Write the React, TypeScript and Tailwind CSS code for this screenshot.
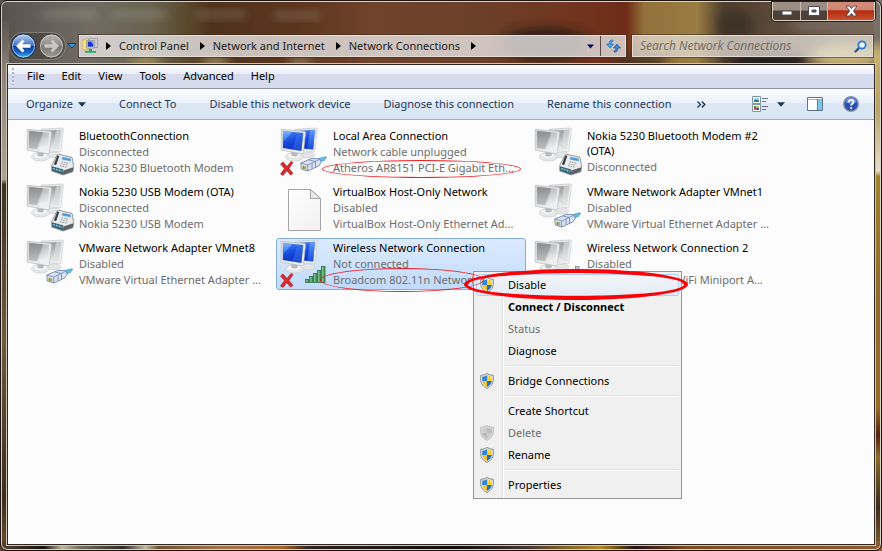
import { clsx } from "clsx";

type Overlay = "modem" | "plug" | "signal";

type Connection = {
  name: string;
  status: string;
  device?: string;
  icon: "monitors" | "document";
  overlay?: Overlay;
  active?: boolean;
  selected?: boolean;
  mark?: "thin" | "wide";
};

const connections: Connection[] = [
  { name: "BluetoothConnection", status: "Disconnected", device: "Nokia 5230 Bluetooth Modem", icon: "monitors", overlay: "modem" },
  { name: "Local Area Connection", status: "Network cable unplugged", device: "Atheros AR8151 PCI-E Gigabit Eth...", icon: "monitors", overlay: "plug", active: true, mark: "wide" },
  { name: "Nokia 5230 Bluetooth Modem #2 (OTA)", status: "Disconnected", icon: "monitors", overlay: "modem" },
  { name: "Nokia 5230 USB Modem (OTA)", status: "Disconnected", device: "Nokia 5230 USB Modem", icon: "monitors", overlay: "modem" },
  { name: "VirtualBox Host-Only Network", status: "Disabled", device: "VirtualBox Host-Only Ethernet Ad...", icon: "document" },
  { name: "VMware Network Adapter VMnet1", status: "Disabled", device: "VMware Virtual Ethernet Adapter ...", icon: "monitors", overlay: "plug" },
  { name: "VMware Network Adapter VMnet8", status: "Disabled", device: "VMware Virtual Ethernet Adapter ...", icon: "monitors", overlay: "plug" },
  { name: "Wireless Network Connection", status: "Not connected", device: "Broadcom 802.11n Network", icon: "monitors", overlay: "signal", active: true, selected: true, mark: "thin" },
  { name: "Wireless Network Connection 2", status: "Disabled", device: "Microsoft Virtual WiFi Miniport A...", icon: "monitors", overlay: "signal" },
];

type MenuEntry =
  | "separator"
  | { label: string; shield?: boolean; bold?: boolean; disabled?: boolean; hot?: boolean };

const contextMenu: MenuEntry[] = [
  { label: "Disable", shield: true, hot: true },
  { label: "Connect / Disconnect", bold: true },
  { label: "Status", disabled: true },
  { label: "Diagnose" },
  "separator",
  { label: "Bridge Connections", shield: true },
  "separator",
  { label: "Create Shortcut" },
  { label: "Delete", shield: true, disabled: true },
  { label: "Rename", shield: true },
  "separator",
  { label: "Properties", shield: true },
];

const menus = ["File", "Edit", "View", "Tools", "Advanced", "Help"];
const crumbs = ["Control Panel", "Network and Internet", "Network Connections"];
const commands = ["Connect To", "Disable this network device", "Diagnose this connection", "Rename this connection"];

const Wallpaper = () => (
  <svg
    className="absolute inset-0 h-full w-full"
    viewBox="0 0 882 551"
    preserveAspectRatio="none"
    aria-hidden="true"
  >
    <defs>
      <linearGradient id="wall-top">
        <stop offset="0" stopColor="#57524c" />
        <stop offset=".1" stopColor="#716b62" />
        <stop offset=".17" stopColor="#6a6350" />
        <stop offset=".21" stopColor="#5b4a2e" />
        <stop offset=".24" stopColor="#4f321c" />
        <stop offset=".34" stopColor="#5c351d" />
        <stop offset=".42" stopColor="#70432b" />
        <stop offset=".54" stopColor="#6b4029" />
        <stop offset=".64" stopColor="#71371f" />
        <stop offset=".71" stopColor="#6f2c18" />
        <stop offset=".73" stopColor="#92713a" />
        <stop offset=".79" stopColor="#997d42" />
        <stop offset=".82" stopColor="#51402f" />
        <stop offset=".9" stopColor="#5e4c3e" />
        <stop offset="1" stopColor="#7b6a5d" />
      </linearGradient>
      <linearGradient id="wall-left" x2="0" y2="1">
        <stop offset="0" stopColor="#5c564e" />
        <stop offset=".1" stopColor="#8d8379" />
        <stop offset=".3" stopColor="#aaa39a" />
        <stop offset=".31" stopColor="#3b3122" />
        <stop offset=".6" stopColor="#6b5a3e" />
        <stop offset=".9" stopColor="#3a2c1c" />
        <stop offset="1" stopColor="#6b5034" />
      </linearGradient>
      <linearGradient id="wall-right" x2="0" y2="1">
        <stop offset="0" stopColor="#77706a" />
        <stop offset=".07" stopColor="#7a7066" />
        <stop offset=".1" stopColor="#c0ac6a" />
        <stop offset=".2" stopColor="#b7a368" />
        <stop offset=".31" stopColor="#e6dfcb" />
        <stop offset=".32" stopColor="#a08228" />
        <stop offset=".55" stopColor="#94692c" />
        <stop offset=".74" stopColor="#9b6a28" />
        <stop offset=".79" stopColor="#57200f" />
        <stop offset=".83" stopColor="#8a6a28" />
        <stop offset=".92" stopColor="#3c2b1e" />
        <stop offset="1" stopColor="#8a6030" />
      </linearGradient>
      <linearGradient id="wall-bottom">
        <stop offset="0" stopColor="#5b4430" />
        <stop offset=".05" stopColor="#15100c" />
        <stop offset=".07" stopColor="#c0b69a" />
        <stop offset=".09" stopColor="#77705c" />
        <stop offset=".14" stopColor="#2e2a24" />
        <stop offset=".165" stopColor="#c3b99f" />
        <stop offset=".18" stopColor="#6e5232" />
        <stop offset=".25" stopColor="#a4764c" />
        <stop offset=".32" stopColor="#a8652a" />
        <stop offset=".35" stopColor="#31231d" />
        <stop offset=".52" stopColor="#120d10" />
        <stop offset=".6" stopColor="#4a382f" />
        <stop offset=".68" stopColor="#b48a22" />
        <stop offset=".72" stopColor="#241010" />
        <stop offset=".78" stopColor="#7f4c20" />
        <stop offset="1" stopColor="#8a5a30" />
      </linearGradient>
      <filter id="soft" x="-50%" y="-50%" width="200%" height="200%">
        <feGaussianBlur stdDeviation="6" />
      </filter>
      <filter id="soft-label" x="-50%" y="-50%" width="200%" height="200%">
        <feGaussianBlur stdDeviation="4" />
      </filter>
    </defs>
    <rect width="882" height="70" fill="url(#wall-top)" />
    <rect y="20" width="9" height="531" fill="url(#wall-left)" />
    <rect x="874" width="8" height="551" fill="url(#wall-right)" />
    <rect y="541" width="882" height="10" fill="url(#wall-bottom)" />
    <g filter="url(#soft)">
      <ellipse cx="545" cy="44" rx="46" ry="16" fill="#2a1f18" />
      <ellipse cx="640" cy="62" rx="30" ry="8" fill="#4a3322" />
      <ellipse cx="770" cy="62" rx="42" ry="9" fill="#1d1612" />
      <ellipse cx="845" cy="56" rx="34" ry="12" fill="#cbb777" />
      <ellipse cx="735" cy="26" rx="18" ry="16" fill="#3d3026" />
      <ellipse cx="830" cy="24" rx="40" ry="8" fill="#77695e" />
      <ellipse cx="145" cy="62" rx="16" ry="5" fill="#b09a5c" />
      <ellipse cx="215" cy="63" rx="14" ry="5" fill="#b8a679" />
      <ellipse cx="300" cy="64" rx="12" ry="4" fill="#b9a68a" />
    </g>
    <g filter="url(#soft-label)" fill="#b9b0a4" opacity=".3">
      <rect x="42" y="11" width="54" height="7" />
      <rect x="112" y="11" width="54" height="7" />
      <rect x="196" y="11" width="50" height="7" />
      <rect x="274" y="12" width="46" height="7" />
    </g>
  </svg>
);

const CaptionButtons = () => (
  <div className="flex h-[19px] overflow-hidden rounded-b-[4px] border border-t-0 border-[#d8cfc7] shadow-[0_0_0_1px_#2b211b]">
    <button
      aria-label="Minimize"
      className="flex w-7 items-center justify-center border-r border-[#c9bfb6] bg-linear-to-b from-[#9a8d84] from-45% to-[#4d4037] to-50%"
    >
      <svg width="12" height="12" viewBox="0 0 12 12">
        <rect x="1" y="6" width="10" height="4" fill="#fff" stroke="#4d4a52" />
      </svg>
    </button>
    <button
      aria-label="Maximize"
      className="flex w-[27px] items-center justify-center border-r border-[#c9bfb6] bg-linear-to-b from-[#9a8d84] from-45% to-[#4d4037] to-50%"
    >
      <svg width="12" height="12" viewBox="0 0 12 12">
        <path d="M.5 1.500h11v9H.5zM4 5v2h4V5z" fill="#fff" fillRule="evenodd" stroke="#4d4a52" />
      </svg>
    </button>
    <button
      aria-label="Close"
      className="flex w-[46px] items-center justify-center bg-linear-to-b from-[#d08a76] from-40% via-[#b6280c] via-50% to-[#c8502c]"
    >
      <svg width="13" height="12" viewBox="0 0 13 12">
        <path
          d="M1 1h3.500l2 2.500 2-2.500H12L8.500 6l3.500 5H8.500l-2-2.500-2 2.500H1L4.500 6z"
          fill="#fff"
          stroke="#5b4a50"
        />
      </svg>
    </button>
  </div>
);

const NavButtons = () => (
  <div className="flex items-center">
    <div className="flex rounded-full bg-black/20 shadow-[0_0_0_1px_#ffffff33]">
      <button aria-label="Back">
        <svg width="27" height="26" viewBox="0 0 27 26">
          <defs>
            <linearGradient id="back" x2="0" y2="1">
              <stop offset="0" stopColor="#bcd3f3" />
              <stop offset=".48" stopColor="#3f72c4" />
              <stop offset=".5" stopColor="#0b3a94" />
              <stop offset=".75" stopColor="#1660c4" />
              <stop offset="1" stopColor="#3fc4f5" />
            </linearGradient>
          </defs>
          <circle cx="13.500" cy="13" r="12" fill="url(#back)" stroke="#142a55" />
          <circle cx="13.500" cy="13" r="11" fill="none" stroke="#d5e4f8" opacity=".7" />
          <path d="M6 13l6.500-6.500 2 2L12 11.300h8.500v3.400H12l2.500 2.800-2 2z" fill="#fff" />
        </svg>
      </button>
      <button aria-label="Forward" disabled>
        <svg width="28" height="26" viewBox="0 0 28 26">
          <defs>
            <linearGradient id="forward" x2="0" y2="1">
              <stop offset="0" stopColor="#b9b7b2" />
              <stop offset=".48" stopColor="#8d8b86" />
              <stop offset=".5" stopColor="#75736e" />
              <stop offset="1" stopColor="#a09e99" />
            </linearGradient>
          </defs>
          <circle cx="14.500" cy="13" r="12" fill="url(#forward)" stroke="#4c4a46" />
          <circle cx="14.500" cy="13" r="11" fill="none" stroke="#e3e2df" opacity=".6" />
          <path d="M22 13l-6.500-6.500-2 2 2.500 2.800H7.500v3.400H16l-2.500 2.800 2 2z" fill="#c9c8c5" />
        </svg>
      </button>
    </div>
    <button aria-label="Recent pages" className="ml-0.5">
      <svg width="10" height="8" viewBox="0 0 10 8">
        <path d="M.8 1.500h8.400L5 6z" fill="#3c9be0" stroke="#123a66" />
      </svg>
    </button>
  </div>
);

const AddressIcon = () => (
  <svg width="16" height="16" viewBox="0 0 16 16" className="shrink-0" aria-hidden="true">
    <path d="M.3 2.500L4 .8h2.500v11H.3z" fill="#f3dd7e" stroke="#c2a440" strokeWidth=".6" />
    <path d="M7 .5h8.500v9H7z" fill="#c9cdd6" stroke="#8b8f99" strokeWidth=".6" />
    <path d="M4.500 2.500h8v7.500h-8z" fill="#d8dce5" stroke="#777c88" strokeWidth=".6" />
    <path d="M5.700 3.500h5.600v5.200H5.700z" fill="#1733d1" />
    <path d="M8.500 3.500h2.800v3z" fill="#8fa8f5" />
    <path d="M7 11h3v2h4v1.800H3V13h4z" fill="#1fae6b" />
  </svg>
);

const Caret = ({ className }: { className?: string }) => (
  <svg width="9" height="5" viewBox="0 0 9 5" className={className} aria-hidden="true">
    <path d="M0 0h9L4.500 5z" fill="currentColor" />
  </svg>
);

const Chevron = () => (
  <svg width="5" height="8" viewBox="0 0 5 8" className="mx-2 shrink-0" aria-hidden="true">
    <path d="M0 0l5 4-5 4z" fill="#000" />
  </svg>
);

const AddressBar = () => (
  <nav
    aria-label="Address"
    className="ml-0.5 flex h-[22px] min-w-0 flex-1 items-center border border-[#e6ded8]/90 bg-[#e9e5e3]/80 pl-0.5 shadow-[0_0_0_1px_#40302699]"
  >
    <AddressIcon />
    {crumbs.map((crumb) => (
      <span key={crumb} className="flex items-center whitespace-nowrap">
        <Chevron />
        <a href="#" className="mr-[3px] text-[#1b1b1b]">
          {crumb}
        </a>
      </span>
    ))}
    <Chevron />
    <span className="flex-1" />
    <button aria-label="Previous locations" className="px-[6px]">
      <Caret className="w-[7px] text-[#00005a]" />
    </button>
    <button
      aria-label="Refresh"
      className="flex h-full w-[25px] items-center justify-center border-l border-[#5b4d45]"
    >
      <svg width="15" height="14" viewBox="0 0 15 14">
        <path d="M7 1C4.500.8 3 2 3 5H.5L4 9l3.500-4H5c0-1.800.6-2.500 2-2.800z" fill="#4aa3e6" stroke="#1d62b0" strokeWidth=".6" />
        <path d="M8 13c2.500.2 4-1 4-4h2.500L11 5 7.500 9H10c0 1.800-.6 2.500-2 2.800z" fill="#3a86d8" stroke="#174f99" strokeWidth=".6" />
      </svg>
    </button>
  </nav>
);

const SearchBox = () => (
  <label className="ml-[6px] flex h-[22px] w-[241px] items-center border border-[#e6ded8]/90 bg-[#e6e0d8]/75 pl-[7px] pr-[5px] shadow-[0_0_0_1px_#40302699]">
    <input
      type="text"
      aria-label="Search Network Connections"
      placeholder="Search Network Connections"
      className="min-w-0 flex-1 bg-transparent font-['Open_Sans','Noto_Sans',sans-serif] text-[12px] italic outline-none placeholder:text-[#6d6964]"
    />
    <svg width="13" height="13" viewBox="0 0 13 13" aria-hidden="true">
      <path d="M5.500 7.500L1.500 11.500" stroke="#24539c" strokeWidth="2.400" strokeLinecap="round" />
      <circle cx="8" cy="5" r="3.700" fill="#e6f2fc" stroke="#2f7cc8" strokeWidth="1.800" />
    </svg>
  </label>
);

const MenuBar = () => (
  <div className="flex h-6 items-center border-b border-[#8c95a8] bg-linear-to-b from-white from-0% via-[#e9edf7] via-38% to-[#d6dcee] to-40% pb-px pl-1">
    <span className="h-[17px] w-[2px] bg-[repeating-linear-gradient(to_bottom,#b2b7c4_0_2px,transparent_2px_4px)]" />
    <div className="ml-[13px] flex gap-[17px]">
      {menus.map((menu) => (
        <button key={menu}>{menu}</button>
      ))}
    </div>
  </div>
);

const Toolbar = () => (
  <div className="flex h-[31px] items-center border-b border-[#a0afc3] bg-linear-to-b from-[#fafcfe] from-0% via-[#e9f1fb] via-45% to-[#dce7f5] to-50% pl-[18px] pr-[15px] text-[#1e395b]">
    <div className="flex items-center gap-[33px] whitespace-nowrap">
      <button className="flex items-center gap-[5px]">
        Organize <Caret className="w-2" />
      </button>
      {commands.map((command) => (
        <button key={command}>{command}</button>
      ))}
    </div>
    <button aria-label="More commands" className="ml-[26px]">
      <svg width="9" height="7" viewBox="0 0 9 7">
        <path d="M.5.500L3.500 3.500.500 6.500M4.800.500l3 3-3 3" fill="none" stroke="#1e395b" strokeWidth="1.400" />
      </svg>
    </button>
    <div className="ml-auto flex items-center">
      <button aria-label="Change your view">
        <svg width="17" height="16" viewBox="0 0 17 16">
          <path d="M.5.500h8v7h-8zM.5 8.500h8v7h-8z" fill="#fff" stroke="#8391a5" />
          <path d="M2 2h5v4H2z" fill="#9ed3ef" />
          <path d="M2 4.500L4 3.500l3 1V6H2z" fill="#2a7d74" />
          <path d="M2 10h2.500v2H2z" fill="#3b8f3b" />
          <path d="M4.500 10H7v2H4.500z" fill="#e0b62f" />
          <path d="M2 12h2.500v2H2z" fill="#c84431" />
          <path d="M4.500 12H7v2H4.500z" fill="#2a4ba8" />
          <path d="M10 2.500h6M10 5.500h4M10 10.500h6M10 13.500h4" stroke="#63748c" />
        </svg>
      </button>
      <button aria-label="More view options" className="ml-2">
        <Caret className="w-2" />
      </button>
      <button aria-label="Show the preview pane" className="ml-[22px]">
        <svg width="16" height="14" viewBox="0 0 16 14">
          <path d="M.5.500h15v13H.5z" fill="#fff" stroke="#5d7391" />
          <path d="M1 2.500h14" stroke="#a4b3c6" />
          <path d="M10 3h5v10h-5z" fill="#7cc6e6" />
          <path d="M10.500 2v11" stroke="#3b8bb5" />
        </svg>
      </button>
      <button aria-label="Get help" className="ml-5">
        <svg width="16" height="16" viewBox="0 0 16 16">
          <circle cx="8" cy="8" r="7.300" fill="#2a50b8" stroke="#8d93a0" strokeWidth="1.400" />
          <path d="M2.300 6a6 6 0 0 1 11.400 0q-5.700 3-11.400 0z" fill="#6f92de" />
          <path d="M5.800 6.200c0-3.200 4.600-3 4.600-.2 0 1.700-2.300 1.700-2.300 3.600" fill="none" stroke="#fff" strokeWidth="1.800" />
          <circle cx="8.100" cy="12" r="1.100" fill="#fff" />
        </svg>
      </button>
    </div>
  </div>
);

// gradients shared by every connection icon
const IconDefs = () => (
  <svg width="0" height="0" className="absolute" aria-hidden="true">
    <defs>
      <linearGradient id="screen-off" x1="0" y1="0" x2=".3" y2="1">
        <stop offset="0" stopColor="#8f9091" />
        <stop offset=".5" stopColor="#b3b4b5" />
        <stop offset="1" stopColor="#e9eaea" />
      </linearGradient>
      <linearGradient id="glare-off" x2="0" y2="1">
        <stop offset="0" stopColor="#8b8c8d" />
        <stop offset="1" stopColor="#b9babb" />
      </linearGradient>
      <linearGradient id="screen-on" x1="0" y1="0" x2=".3" y2="1">
        <stop offset="0" stopColor="#4d8df5" />
        <stop offset=".5" stopColor="#1a50e0" />
        <stop offset="1" stopColor="#0a2fc4" />
      </linearGradient>
      <linearGradient id="glare-on" x2="0" y2="1">
        <stop offset="0" stopColor="#86bbff" />
        <stop offset="1" stopColor="#2565e8" />
      </linearGradient>
      <linearGradient id="bezel" x2="1" y2="1">
        <stop offset="0" stopColor="#d4d6d8" />
        <stop offset="1" stopColor="#f6f7f7" />
      </linearGradient>
      <linearGradient id="bar-on" x2="1">
        <stop offset="0" stopColor="#9bcfa6" />
        <stop offset="1" stopColor="#358852" />
      </linearGradient>
      <linearGradient id="paper" x2="1" y2="1">
        <stop offset="0" stopColor="#fff" />
        <stop offset="1" stopColor="#f1f1f1" />
      </linearGradient>
    </defs>
  </svg>
);

const BackMonitor = ({ active }: { active?: boolean }) => (
  <g>
    <ellipse cx="29" cy="28" rx="7" ry="3" fill="#e3e5e6" stroke="#c5c8ca" strokeWidth=".5" />
    <path d="M16 2.200L37.500 1l.8.800L36 24l-1.500.8L16 23z" fill="url(#bezel)" stroke="#c3c6c9" strokeWidth=".6" />
    <path d="M18 4l18-1.200L34.200 22.500 18 21z" fill={active ? "url(#screen-on)" : "url(#screen-off)"} />
    <path d="M31 3.200l5-.4-1.800 19.700-6-.6z" fill={active ? "url(#glare-on)" : "#dedfdf"} opacity=".6" />
  </g>
);

const FrontMonitor = ({ active }: { active?: boolean }) => (
  <g>
    <ellipse cx="15.500" cy="29.800" rx="9" ry="4.300" fill="#e6e8e9" stroke="#c3c6c9" strokeWidth=".6" />
    <ellipse cx="15" cy="28.600" rx="6" ry="2.300" fill="#f5f6f6" />
    <path d="M12 24l7 1-.5 3.800q-3 1.200-6 0z" fill="#b7babd" />
    <path d="M2.300 2.300L25.800 4.500l.8.800L24.300 26.200l-1.200.5L2.200 23.200z" fill="url(#bezel)" stroke="#bcbfc2" strokeWidth=".7" />
    <path d="M4 4l20.200 1.900L22.400 24 3.900 21z" fill={active ? "url(#screen-on)" : "url(#screen-off)"} />
    <path
      d={active ? "M4 4l9 .9L3.900 16z" : "M4 4l13.500 1.300L12 22.300 3.900 21z"}
      fill={active ? "url(#glare-on)" : "url(#glare-off)"}
      opacity=".85"
    />
    <path d="M18.500 5.400l5.700.5L22.400 24l-9-1.500z" fill={active ? "#5a96f7" : "#fff"} opacity=".3" />
  </g>
);

const ModemOverlay = () => (
  <g transform="translate(26 27)">
    <path d="M6 1.200L8.500.5 21 3.300l1.800 10-1 4.500L12 21 .7 17v-5.500z" fill="#e9ebed" stroke="#6f7479" strokeWidth=".7" />
    <path d="M6.300 1.500l2 .5L5.200 11l-2.400-.6z" fill="#3a3e42" />
    <path d="M11.300 3l8.200 1.500.5 2.800-9-1.700z" fill="#3f9ae2" stroke="#b9c3cc" strokeWidth=".4" />
    <path d="M10.500 7.800l7.500 1.500M9.700 9.800l7.500 1.500M9 11.800l7.500 1.500" stroke="#8e9399" strokeDasharray="1.600 .9" strokeWidth=".9" />
    <path d="M1 12.200l11.300 3.300-.4 5L1 16.700z" fill="#3e5a68" />
    <path d="M2 14.500l9.300 2.900" stroke="#69cde6" strokeWidth="1.800" strokeDasharray="1.900 1" />
    <path d="M12.300 16.500l10-3.200-.6 4.200-9.700 3.200z" fill="#5c6166" />
  </g>
);

const PlugOverlay = () => (
  <g transform="translate(21 29)">
    <path d="M15 3.500L25 .8l1.800.2-2.300 3.500-6 2z" fill="#5cc0e6" stroke="#3f8fb8" strokeWidth=".5" />
    <path d="M.8 7l11-4.500L19 2.700l2.500 3.300-2.800 4-11 5L1.200 13z" fill="#d9e2f2" stroke="#5f7ba8" strokeWidth=".8" />
    <path d="M.8 7l7 2-.2 6M7.800 9l11-5.300M12 7v5.500M15.500 5.500v6M9 4l6.500 1.500" fill="none" stroke="#7088b0" strokeWidth=".8" />
    <path d="M2 9.500v3l4.500 1.300v-3.600z" fill="#c9c98a" />
    <path d="M3.500 10v3M5 10.400v3" stroke="#667" strokeWidth=".7" />
  </g>
);

const SignalOverlay = ({ active }: { active?: boolean }) => (
  <g
    fill={active ? "url(#bar-on)" : "#c4c6c8"}
    stroke={active ? "#2a7343" : "#85888b"}
    strokeWidth=".8"
  >
    <rect x="26.500" y="40.500" width="3.500" height="3" />
    <rect x="30.500" y="37.500" width="3.500" height="6" />
    <rect x="34.500" y="34.500" width="3.500" height="9" />
    <rect x="38.500" y="31.500" width="3.500" height="12" />
    <rect x="42.500" y="27.500" width="3.500" height="16" />
  </g>
);

const ConnectionIcon = ({ icon, overlay, active }: Connection) => (
  <svg width="52" height="50" viewBox="0 0 52 50" className="shrink-0" aria-hidden="true">
    {icon === "document" ? (
      <>
        <path d="M9.500 6.500h22l10 9v32h-32z" fill="url(#paper)" stroke="#a5a5a5" />
        <path d="M31.500 6.500v9h10z" fill="#e9e9e9" stroke="#a5a5a5" />
      </>
    ) : (
      <>
        <BackMonitor active={active} />
        <FrontMonitor active={active} />
        {overlay === "modem" && <ModemOverlay />}
        {overlay === "plug" && <PlugOverlay />}
        {overlay === "signal" && <SignalOverlay active={active} />}
        {active && (
          <path
            d="M1.500 37l2.500-2 4 4.500 4-5 2 1-4 6 4 5-2.500 1.500-3.700-4.300L4 48.500 1.500 47 5.500 41.500z"
            fill="#dc2a2e"
            stroke="#a8161c"
            strokeWidth=".6"
          />
        )}
      </>
    )}
  </svg>
);

const ConnectionTile = ({ connection }: { connection: Connection }) => (
  <li
    className={clsx(
      "relative flex h-[52px] w-[250px] rounded-[3px] border pl-[2px]",
      connection.selected
        ? "border-[#84acdd] bg-linear-to-b from-[#dcebfd] to-[#c1dbfc]"
        : "border-transparent"
    )}
  >
    <ConnectionIcon {...connection} />
    <div className="ml-[2px] min-w-0 flex-1 pt-px leading-4 text-[#6d6d6d]">
      <h3 className="mb-px leading-[15px] text-black">{connection.name}</h3>
      <p>{connection.status}</p>
      {connection.device && <p className="whitespace-nowrap">{connection.device}</p>}
    </div>
    {connection.mark && (
      <span
        className={clsx(
          "pointer-events-none absolute z-10 rounded-[50%] border border-[#ee1c24]",
          connection.mark === "wide"
            ? "left-[45px] top-[33px] h-[18px] w-[199px]"
            : "left-[43px] top-[29px] h-6 w-[164px]"
        )}
      />
    )}
  </li>
);

const Shield = ({ muted }: { muted?: boolean }) => (
  <svg width="14" height="16" viewBox="0 0 14 16" aria-hidden="true">
    <path
      d="M7 .5Q4.500 2.300.7 2.300v5Q1 12.500 7 15.500q6-3 6.300-8.200v-5Q9.500 2.300 7 .5z"
      fill={muted ? "#dcdcdc" : "#e3e6e8"}
      stroke={muted ? "#b9b9b9" : "#7f858a"}
      strokeWidth=".9"
    />
    <path d="M7 2.200V8H2.200V3.700Q5 3.500 7 2.200z" fill={muted ? "#cdcdcd" : "#2b86d9"} />
    <path d="M7 2.200V8h4.800V3.700Q9 3.500 7 2.200z" fill={muted ? "#bdbdbd" : "#fbd22c"} />
    <path d="M2.200 8H7v6Q2.800 11.700 2.200 8z" fill={muted ? "#bdbdbd" : "#f6c21c"} />
    <path d="M11.800 8H7v6q4.200-2.300 4.800-6z" fill={muted ? "#cdcdcd" : "#1c6fc9"} />
  </svg>
);

const ContextMenu = () => (
  <div
    role="menu"
    className="absolute left-[465px] top-[152px] w-[209px] border border-[#979797] bg-[#f0f0f0] bg-[linear-gradient(to_right,transparent_28px,#e2e3e3_28px,#e2e3e3_29px,#fff_29px,#fff_30px,transparent_30px)] p-[2px]"
  >
    {contextMenu.map((entry, index) =>
      entry === "separator" ? (
        <div key={index} role="separator" className="ml-7 flex h-2 flex-col justify-center">
          <div className="h-[2px] border-b border-white bg-[#e0e0e0]" />
        </div>
      ) : (
        <button
          key={index}
          role="menuitem"
          disabled={entry.disabled}
          className={clsx(
            "flex h-[22px] w-full items-center rounded-[3px] border text-left",
            entry.hot
              ? "border-[#aecff7] bg-linear-to-b from-[#f1f4f8] to-[#e6edf6]"
              : "border-transparent",
            entry.bold && "font-bold",
            entry.disabled ? "text-[#6d6d6d]" : "text-black"
          )}
        >
          <span className="flex w-5 shrink-0 justify-center">
            {entry.shield && <Shield muted={entry.disabled} />}
          </span>
          <span className="ml-[11px]">{entry.label}</span>
        </button>
      )
    )}
    <span className="pointer-events-none absolute -left-2.5 -top-[3px] h-[31px] w-[224px] rounded-[50%] border-4 border-[#fb0007]" />
  </div>
);

const App = () => (
  <div className="relative flex min-h-screen flex-col overflow-hidden bg-[#1a0f0b] font-['Noto_Sans','Open_Sans',sans-serif] text-[11px] leading-4 text-black">
    <Wallpaper />
    <IconDefs />
    <div className="relative flex flex-1 flex-col rounded-[7px] border border-[#1d1512] px-[6px] pb-[5px] shadow-[inset_0_0_0_1px_#d9d0c6]">
      <header className="flex flex-col">
        <div className="flex h-8 items-start justify-end pt-px">
          <CaptionButtons />
        </div>
        <div className="mb-[5px] flex h-[26px] items-center pl-[3px] pr-[2px]">
          <NavButtons />
          <AddressBar />
          <SearchBox />
        </div>
      </header>
      <main className="flex flex-1 flex-col border border-[#2e251e] bg-[#fcfcfc] shadow-[0_0_0_1px_#cfc6ba]">
        <MenuBar />
        <Toolbar />
        <section aria-label="Network connections" className="relative -mt-px flex-1 pl-[14px] pt-[7px]">
          <ul className="flex flex-wrap gap-1">
            {connections.map((connection) => (
              <ConnectionTile key={connection.name} connection={connection} />
            ))}
          </ul>
          <ContextMenu />
        </section>
      </main>
    </div>
  </div>
);

export default App;
